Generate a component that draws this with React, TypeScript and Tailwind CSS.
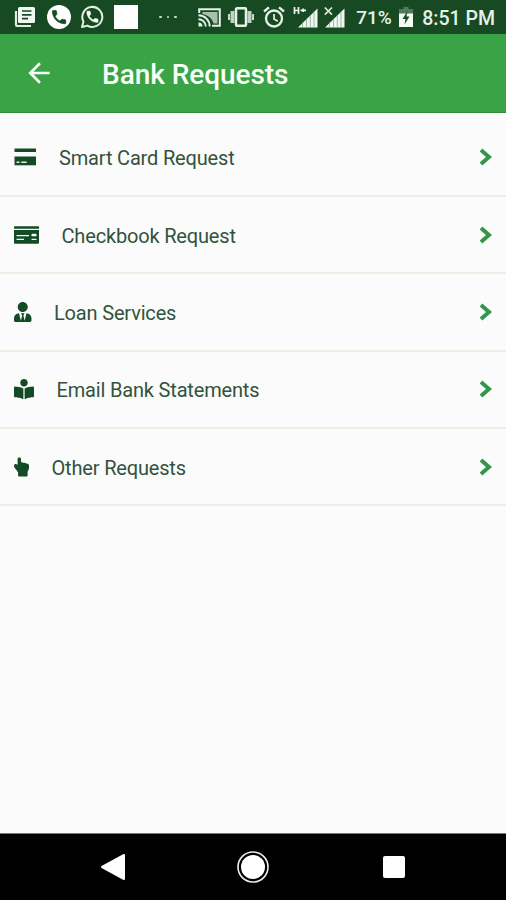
import type { ReactNode } from 'react'
import { FaBookReader, FaMoneyCheck, FaUserTie } from 'react-icons/fa'
import { MdArrowBack } from 'react-icons/md'

const requests = [
  { label: 'Smart Card Request', icon: <CardIcon /> },
  { label: 'Checkbook Request', icon: <FaMoneyCheck className="h-5 w-[25px]" /> },
  { label: 'Loan Services', icon: <FaUserTie className="h-5 w-[17.5px]" /> },
  { label: 'Email Bank Statements', icon: <FaBookReader className="h-5 w-5" /> },
  { label: 'Other Requests', icon: <HandIcon /> },
]

function CardIcon() {
  return (
    <svg viewBox="0 0 22.5 20" className="h-5 w-[22.5px]" fill="currentColor">
      <path d="M.5 1.500h21.500V5H.5Z" />
      <path d="M.5 9.500h21.500v8.800H.5Z" />
      <path d="M2.500 15.300h3M7.200 15.300h5.500" stroke="#e3ece4" strokeWidth="1.600" />
    </svg>
  )
}

function HandIcon() {
  return (
    <svg viewBox="0 0 15 20" className="h-5 w-[15px]" fill="currentColor">
      <path d="M3.600 1.700C3.600.2 7 .2 7 1.700v3.800c.8-.5 1.900-.4 2.500.4.900-.4 2-.2 2.500.6 1.500-.4 3 .4 3 2v2.200c0 2-1.300 3-1.400 4.300v3.600c0 .6-.3.900-.9.900H5c-.6 0-.9-.3-.9-.9v-3C3.800 13.700 0 11.400 0 8.700 0 7 2 6.400 3.600 7.800Z" />
    </svg>
  )
}

function NewsIcon() {
  return (
    <svg viewBox="0 0 22 22" className="h-[22px] w-[22px]" fill="none">
      <path d="M2 5v13.500a1.500 1.500 0 0 0 1.500 1.500H17" stroke="#dfeee2" strokeWidth="2.200" />
      <path d="M5.500 1h14A1.500 1.500 0 0 1 21 2.500v13a1.500 1.500 0 0 1-1.500 1.500h-14A1.500 1.500 0 0 1 4 15.500v-13A1.500 1.500 0 0 1 5.500 1Z" fill="#f1f8f2" />
      <path d="M8 5h9.500M8 8.800h9.500M8 12.600h6" stroke="#174a23" strokeWidth="1.700" />
    </svg>
  )
}

const handset =
  'M6.620 10.790c1.440 2.830 3.760 5.140 6.590 6.590l2.200-2.200c.27-.27.67-.36 1.020-.24 1.120.37 2.330.57 3.570.57.55 0 1 .45 1 1V20c0 .55-.45 1-1 1-9.390 0-17-7.610-17-17 0-.55.45-1 1-1h3.500c.55 0 1 .45 1 1 0 1.250.2 2.450.57 3.570.11.35.03.74-.25 1.020l-2.200 2.200z'

function PhoneIcon() {
  return (
    <svg viewBox="0 0 24 24" className="h-6 w-6">
      <circle cx="12" cy="12" r="12" fill="#fff" />
      <path d={handset} fill="#174a23" stroke="#174a23" transform="translate(3.200 3.200) scale(.74)" />
    </svg>
  )
}

function WhatsappIcon() {
  return (
    <svg viewBox="0 0 24 24" className="h-6 w-6">
      <path d="M2 22l1.500-5.400A10 10 0 1 1 7.400 20.600Z" fill="none" stroke="#e3f0e2" strokeWidth="2" strokeLinejoin="round" />
      <path d={handset} fill="#fff" stroke="#fff" transform="translate(5 4.300) scale(.62)" />
    </svg>
  )
}

function CastIcon() {
  return (
    <svg viewBox="0 0 23 19" className="h-[19px] w-[23px]" fill="none" stroke="currentColor">
      <path d="M1.200 5V1.200h20.600v16.600H14" strokeWidth="2" />
      <path d="M4.500 4h15v11.500h-4C14.300 10.500 10 6.800 4.500 6.200Z" fill="#a9c0ac" stroke="none" />
      <path d="M.5 7.300c6.400 0 11.200 5 11.200 11.200M.5 11.200c4 0 7.300 3.200 7.300 7.300" strokeWidth="1.900" />
      <path d="M.5 14.500a4 4 0 0 1 4 4h-4Z" fill="currentColor" stroke="none" />
    </svg>
  )
}

function VibrationIcon() {
  return (
    <svg viewBox="0 0 26 20" className="h-5 w-[26px]">
      <path d="M0 7h2v6H0ZM24 7h2v6h-2Z" fill="#c9dacb" />
      <path d="M2.500 4h4v12h-4ZM19.500 4h4v12h-4Z" fill="#bfd3c2" />
      <rect x="8" y="1.300" width="10" height="17.400" rx="1" fill="none" stroke="currentColor" strokeWidth="2.500" />
    </svg>
  )
}

function AlarmIcon() {
  return (
    <svg viewBox="0 0 22 22" className="h-[22px] w-[22px]" fill="none" stroke="currentColor">
      <circle cx="11" cy="12.500" r="8" strokeWidth="2.300" />
      <path d="M1 5.500 6 1.300M21 5.500l-5-4.200" strokeWidth="2.300" />
      <path d="M11 8v5l3.800 2.200" strokeWidth="1.700" />
    </svg>
  )
}

function SignalIcon({ roaming = false }: { roaming?: boolean }) {
  return (
    <svg viewBox={roaming ? '0 0 25 22' : '4 0 21 22'} className={roaming ? 'h-[22px] w-[25px]' : 'h-[22px] w-[21px]'}>
      <path d="M5 21.500 24.500 2.500v19Z" fill="#f1f8f2" />
      <path d="M9.500 16.500v5M13.500 12.500v9M17.300 9v12.500M21 5.500v16" stroke="#86a78b" strokeWidth=".8" />
      {roaming ? (
        <path d="M1.500 1v7M1.500 4.500h4M5.500 1v7M7.500 4.300h5.500M10.200 2.500v3.600" fill="none" stroke="#edf6ee" strokeWidth="1.700" />
      ) : (
        <path d="m4.800 1.500 7.200 7.200M12 1.500 4.800 8.700" stroke="#dbeadd" strokeWidth="1.700" />
      )}
    </svg>
  )
}

function BatteryIcon() {
  return (
    <svg viewBox="0 0 14 20" className="h-5 w-3.5">
      <path d="M4.500 0h5v2H14v5H0V2h4.500Z" fill="#54795c" />
      <path d="M0 6.500h14V20H0Z" fill="#f4faf4" />
      <path d="M8.500 4 3.500 12h3l-1 5.500 5-8h-3Z" fill="#174a23" />
    </svg>
  )
}

function StatusBar() {
  return (
    <div className="flex h-[34px] items-center bg-[#174a23] text-[#e6f1e7]">
      <div className="ml-3.5 flex items-center">
        <NewsIcon />
        <span className="ml-[11px]"><PhoneIcon /></span>
        <span className="ml-[9px]"><WhatsappIcon /></span>
        <span className="ml-[10px] h-6 w-6 bg-white" />
        <span className="ml-[21px] flex gap-[5px]">
          <i className="h-[2.5px] w-[2.5px] rounded-full bg-[#cfe0d1]" />
          <i className="h-[2.5px] w-[2.5px] rounded-full bg-[#cfe0d1]" />
          <i className="h-[2.5px] w-[2.5px] rounded-full bg-[#cfe0d1]" />
        </span>
      </div>
      <div className="ml-auto mr-[11px] flex items-center">
        <CastIcon />
        <span className="ml-[7px]"><VibrationIcon /></span>
        <span className="ml-[9px]"><AlarmIcon /></span>
        <span className="ml-2"><SignalIcon roaming /></span>
        <span className="ml-1.5"><SignalIcon /></span>
        <span className="ml-[11px] w-[38px] whitespace-nowrap pt-[3px] text-[19px] font-medium">71%</span>
        <span className="ml-[5px]"><BatteryIcon /></span>
        <span className="ml-[9px] pt-[3px] text-[19.5px] font-medium">8:51 PM</span>
      </div>
    </div>
  )
}

function Header() {
  return (
    <header className="flex h-[78.5px] items-center border-b border-[#2d8c3b] bg-[#3aa346] pl-[23px] text-[#f7fff8]">
      <MdArrowBack className="h-8 w-8" />
      <h1 className="ml-[47px] pt-[5px] text-[28px] font-medium leading-none tracking-[-0.05px]">Bank Requests</h1>
    </header>
  )
}

function RequestRow({ icon, label }: { icon: ReactNode; label: string }) {
  return (
    <li className="flex h-[77.4px] items-center border-b-2 border-[#eeeee3] pl-3.5 pr-[14px] text-[#124b25]">
      {icon}
      <span className="ml-[22.5px] pt-0.5 text-[20px] tracking-[-0.17px] text-[#31533d]">{label}</span>
      <svg viewBox="0 0 13 18" className="ml-auto h-[18px] w-[13px]">
        <path d="m2 2 8 7-8 7" fill="none" stroke="#35964a" strokeWidth="4" />
      </svg>
    </li>
  )
}

function NavBar() {
  return (
    <nav className="flex h-[67px] items-center border-t border-[#777] bg-black pl-[100px] text-white">
      <svg viewBox="0 0 26 28" className="h-7 w-[26px]">
        <path d="M24 2v24L2 14Z" fill="#fff" stroke="#fff" strokeWidth="2" strokeLinejoin="round" />
      </svg>
      <svg viewBox="0 0 32 32" className="ml-[111px] h-8 w-8">
        <circle cx="16" cy="16" r="15" fill="none" stroke="#eee" strokeWidth="1.600" />
        <circle cx="16" cy="16" r="12" fill="#fff" />
      </svg>
      <span className="ml-[114px] h-[22px] w-[22px] rounded-[2px] bg-white" />
    </nav>
  )
}

export default function App() {
  return (
    <div className="flex h-[900px] w-[506px] flex-col overflow-hidden bg-[#fbfbfb] font-['Roboto',sans-serif]">
      <StatusBar />
      <Header />
      <ul className="flex-1 pt-[7px]">
        {requests.map((item) => (
          <RequestRow key={item.label} icon={item.icon} label={item.label} />
        ))}
      </ul>
      <NavBar />
    </div>
  )
}
